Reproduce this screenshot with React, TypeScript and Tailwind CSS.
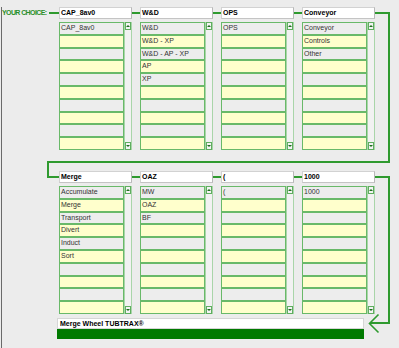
import React from 'react';

type Group = { title: string; items: string[] };

const topGroups: Group[] = [
    { title: 'CAP_8av0', items: ['CAP_8av0'] },
    { title: 'W&D', items: ['W&D', 'W&D - XP', 'W&D - AP - XP', 'AP', 'XP'] },
    { title: 'OPS', items: ['OPS'] },
    { title: 'Conveyor', items: ['Conveyor', 'Controls', 'Other'] },
];

const bottomGroups: Group[] = [
    { title: 'Merge', items: ['Accumulate', 'Merge', 'Transport', 'Divert', 'Induct', 'Sort'] },
    { title: 'OAZ', items: ['MW', 'OAZ', 'BF'] },
    { title: '(', items: ['('] },
    { title: '1000', items: ['1000'] },
];

const Wire = ({ w }: { w: string }) => <div className={`${w} h-[2px] bg-[#2f9a2f] shrink-0`} />;

const Header = ({ title }: { title: string }) => (
    <div className="w-[73px] h-[12px] shrink-0 bg-white border border-[#d2d2d2] border-r-[#b8b8b8] border-b-[#c4c4c4] pl-[1px] text-[7px] leading-[10px] font-bold text-black whitespace-nowrap overflow-hidden">
        {title}
    </div>
);

const ScrollButton = ({ up }: { up?: boolean }) => (
    <div className="h-[8px] w-full border border-[#5fae5f] bg-[#f3f3f3] flex items-center justify-center">
        {up ? (
            <div className="w-0 h-0 border-l-[2px] border-r-[2px] border-b-[2px] border-l-transparent border-r-transparent border-b-[#1d6e1d]" />
        ) : (
            <div className="w-0 h-0 border-l-[2px] border-r-[2px] border-t-[2px] border-l-transparent border-r-transparent border-t-[#1d6e1d]" />
        )}
    </div>
);

const ListBox = ({ items }: { items: string[] }) => (
    <div className="w-[73px] flex shrink-0">
        <div className="w-[65px] flex flex-col">
            {Array.from({ length: 10 }).map((_, i) => (
                <div
                    key={i}
                    className={`h-[12.8px] border border-[#69b969] pl-[1px] text-[7px] leading-[10.8px] text-[#333] whitespace-nowrap overflow-hidden ${i % 2 === 0 ? 'bg-[#ededed]' : 'bg-[#ffffcc]'}`}
                >
                    {items[i] ?? ''}
                </div>
            ))}
        </div>
        <div className="w-[8px] flex flex-col justify-between border-l border-r border-[#a9d5a9] bg-[#f2f2f2]">
            <ScrollButton up />
            <ScrollButton />
        </div>
    </div>
);

export default function App() {
    return (
        <div className="relative w-[399px] h-[348px] bg-[#ececec] overflow-hidden font-['Liberation_Sans',Arial,sans-serif] pl-[1px]">
            <div className="h-full border-l border-[#6a6a6a]">
                {/* top row */}
                <div className="mt-[7px] h-[12px] flex items-center">
                    <div className="w-[47px] text-[7px] leading-[10px] font-bold text-[#2a8f2a] tracking-[-0.6px] whitespace-nowrap">
                        YOUR CHOICE:
                    </div>
                    <Wire w="w-[10px]" />
                    {topGroups.map((g, i) => (
                        <React.Fragment key={g.title}>
                            {i > 0 && <Wire w="w-[8px]" />}
                            <Header title={g.title} />
                        </React.Fragment>
                    ))}
                </div>
                <div className="mt-[3px] ml-[57px] flex gap-[8px]">
                    {topGroups.map((g) => (
                        <ListBox key={g.title} items={g.items} />
                    ))}
                </div>

                {/* bottom row */}
                <div className="mt-[21px] ml-[57px] h-[12px] flex items-center">
                    {bottomGroups.map((g, i) => (
                        <React.Fragment key={g.title}>
                            {i > 0 && <Wire w="w-[8px]" />}
                            <Header title={g.title} />
                        </React.Fragment>
                    ))}
                </div>
                <div className="mt-[3px] ml-[57px] flex gap-[8px]">
                    {bottomGroups.map((g) => (
                        <ListBox key={g.title} items={g.items} />
                    ))}
                </div>

                {/* result */}
                <div className="mt-[4px] ml-[55px] w-[307px]">
                    <div className="h-[11px] bg-white border border-[#d6d6d6] pl-[2px] text-[7px] leading-[9px] font-bold text-black whitespace-nowrap">
                        Merge Wheel TUBTRAX®
                    </div>
                    <div className="h-[10px] bg-[#007a00]" />
                </div>
            </div>

            <svg className="absolute inset-0 pointer-events-none" width="399" height="348" viewBox="0 0 399 348">
                <g fill="none" stroke="#2f9a2f" strokeWidth="2">
                    <path d="M375 13 H389 V162 H48 V177 H59" />
                    <path d="M375 177 H389 V323 H370" />
                    <path d="M378.5 314.5 L369.5 323.5 L378.5 332.5" strokeWidth="1.6" />
                </g>
            </svg>
        </div>
    );
}
